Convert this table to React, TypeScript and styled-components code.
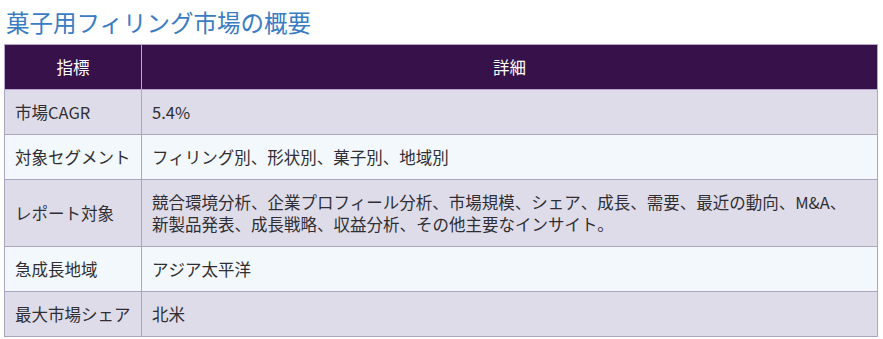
import React from "react";
import styled, { createGlobalStyle } from "styled-components";

const GlobalStyle = createGlobalStyle`
  html, body {
    margin: 0;
    padding: 0;
    background: #ffffff;
  }
  body {
    font-family: "Noto Sans CJK JP", "Noto Sans", sans-serif;
  }
`;

const Page = styled.div`
  padding: 4px 5px 0 4px;
`;

const Title = styled.h2`
  margin: 0 0 4px 2px;
  font-size: 23.5px;
  font-weight: 400;
  line-height: 36px;
  color: #3a7cc2;
`;

const Table = styled.table`
  width: 874px;
  border-collapse: collapse;
  font-size: 16.5px;
  color: #2f2f33;
`;

const HeadCell = styled.th`
  background: #371149;
  color: #ffffff;
  font-weight: 400;
  text-align: center;
  height: 44px;
  padding: 0 10px;
  line-height: 22px;
  border: 1px solid #b9a4d2;
`;

const Row = styled.tr<{ $even: boolean }>`
  background: ${({ $even }) => ($even ? "#f3f8fc" : "#dfdcea")};
`;

const Cell = styled.td<{ $label?: boolean }>`
  width: ${({ $label }) => ($label ? "116px" : "auto")};
  padding: ${({ $label }) => ($label ? "11px 10px" : "11px 20px 11px 10px")};
  line-height: 22px;
  text-align: left;
  vertical-align: middle;
  border: 1px solid #aba6bf;
  white-space: ${({ $label }) => ($label ? "nowrap" : "normal")};
`;

const rows: [string, string][] = [
  ["市場CAGR", "5.4%"],
  ["対象セグメント", "フィリング別、形状別、菓子別、地域別"],
  [
    "レポート対象",
    "競合環境分析、企業プロフィール分析、市場規模、シェア、成長、需要、最近の動向、M&A、新製品発表、成長戦略、収益分析、その他主要なインサイト。",
  ],
  ["急成長地域", "アジア太平洋"],
  ["最大市場シェア", "北米"],
];

export default function App() {
  return (
    <Page>
      <GlobalStyle />
      <Title>菓子用フィリング市場の概要</Title>
      <Table>
        <thead>
          <tr>
            <HeadCell>指標</HeadCell>
            <HeadCell>詳細</HeadCell>
          </tr>
        </thead>
        <tbody>
          {rows.map(([label, value], i) => (
            <Row key={label} $even={i % 2 === 1}>
              <Cell $label>{label}</Cell>
              <Cell>{value}</Cell>
            </Row>
          ))}
        </tbody>
      </Table>
    </Page>
  );
}
